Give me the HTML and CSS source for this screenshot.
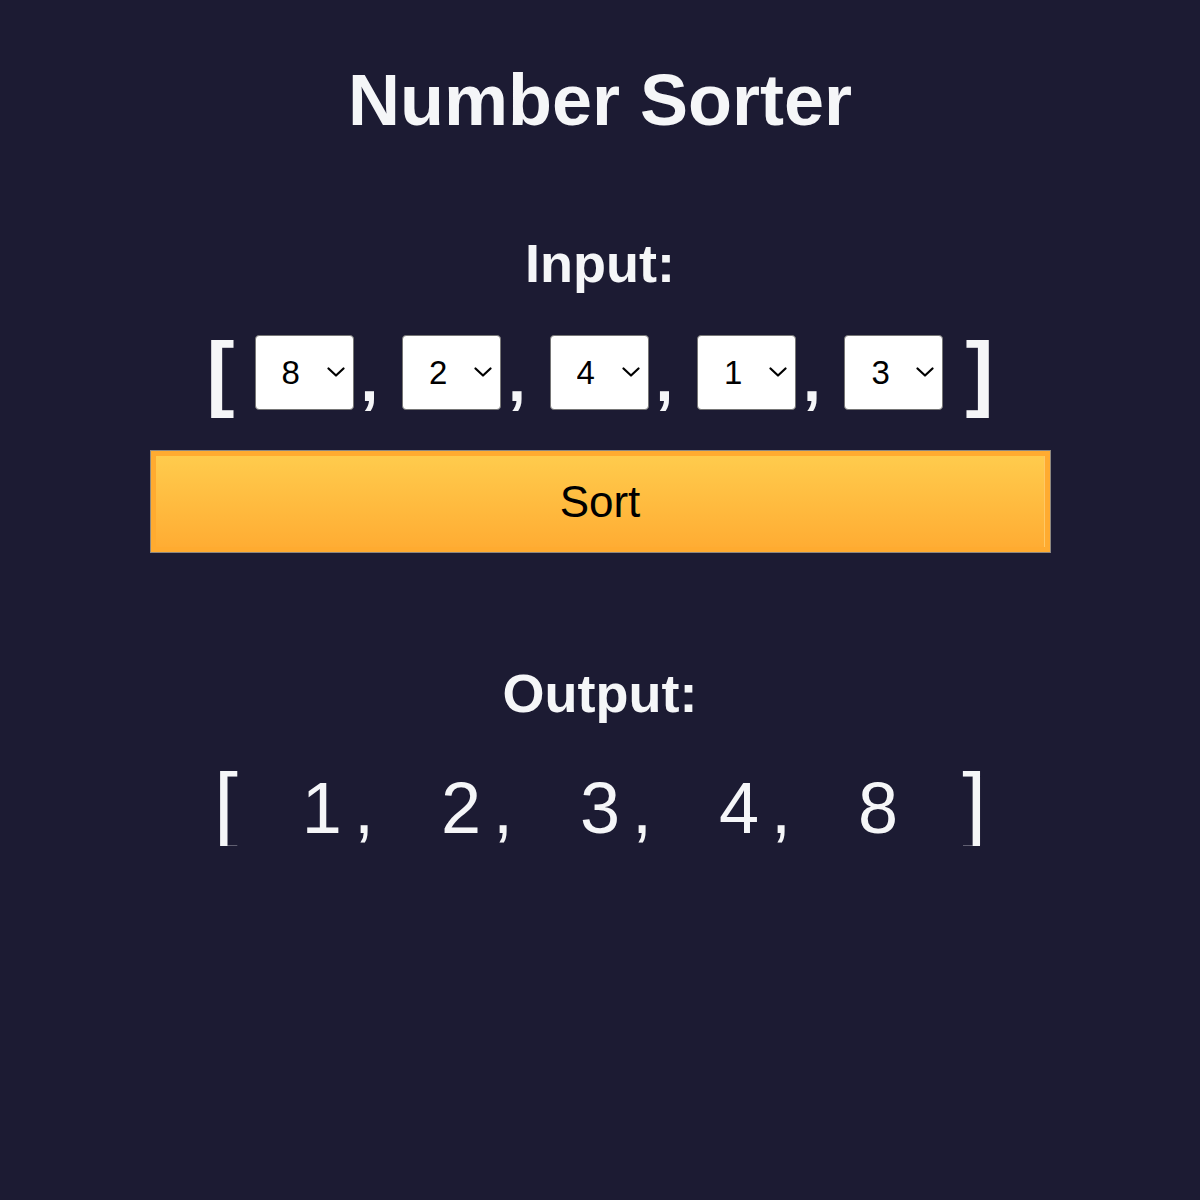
FILE: index.html
```html
<!DOCTYPE html>
<html lang="en">
<head>
<meta charset="utf-8">
<title>Number Sorter</title>
<link rel="stylesheet" href="styles.css">
</head>
<body>
<main class="app">
  <h1 class="title">Number Sorter</h1>
  <h2 class="heading heading-input">Input:</h2>
  <div class="input-row">
    <span class="bracket bracket-open">[</span>
    <div class="item">
      <div class="select-wrap">
        <select class="num"><option>1</option><option>2</option><option>3</option><option>4</option><option>5</option><option>6</option><option>7</option><option selected>8</option><option>9</option></select>
        <svg class="chev" width="18" height="10" viewBox="0 0 18 10"><path d="M1.5 1.5 L9 8.5 L16.5 1.5" fill="none" stroke="#000" stroke-width="2.2" stroke-linecap="round" stroke-linejoin="round"/></svg>
      </div>
      <span class="comma">,</span>
    </div>
    <div class="item">
      <div class="select-wrap">
        <select class="num"><option>1</option><option selected>2</option><option>3</option><option>4</option><option>5</option><option>6</option><option>7</option><option>8</option><option>9</option></select>
        <svg class="chev" width="18" height="10" viewBox="0 0 18 10"><path d="M1.5 1.5 L9 8.5 L16.5 1.5" fill="none" stroke="#000" stroke-width="2.2" stroke-linecap="round" stroke-linejoin="round"/></svg>
      </div>
      <span class="comma">,</span>
    </div>
    <div class="item">
      <div class="select-wrap">
        <select class="num"><option>1</option><option>2</option><option>3</option><option selected>4</option><option>5</option><option>6</option><option>7</option><option>8</option><option>9</option></select>
        <svg class="chev" width="18" height="10" viewBox="0 0 18 10"><path d="M1.5 1.5 L9 8.5 L16.5 1.5" fill="none" stroke="#000" stroke-width="2.2" stroke-linecap="round" stroke-linejoin="round"/></svg>
      </div>
      <span class="comma">,</span>
    </div>
    <div class="item">
      <div class="select-wrap">
        <select class="num"><option selected>1</option><option>2</option><option>3</option><option>4</option><option>5</option><option>6</option><option>7</option><option>8</option><option>9</option></select>
        <svg class="chev" width="18" height="10" viewBox="0 0 18 10"><path d="M1.5 1.5 L9 8.5 L16.5 1.5" fill="none" stroke="#000" stroke-width="2.2" stroke-linecap="round" stroke-linejoin="round"/></svg>
      </div>
      <span class="comma">,</span>
    </div>
    <div class="item">
      <div class="select-wrap">
        <select class="num"><option>1</option><option>2</option><option selected>3</option><option>4</option><option>5</option><option>6</option><option>7</option><option>8</option><option>9</option></select>
        <svg class="chev" width="18" height="10" viewBox="0 0 18 10"><path d="M1.5 1.5 L9 8.5 L16.5 1.5" fill="none" stroke="#000" stroke-width="2.2" stroke-linecap="round" stroke-linejoin="round"/></svg>
      </div>
    </div>
    <span class="bracket bracket-close">]</span>
  </div>
  <button class="sort-btn" type="button">Sort</button>
  <h2 class="heading heading-output">Output:</h2>
  <div class="output-row">
    <span class="out-bracket out-open">[</span>
    <span class="out-item">1<span class="out-comma">,</span></span>
    <span class="out-item">2<span class="out-comma">,</span></span>
    <span class="out-item">3<span class="out-comma">,</span></span>
    <span class="out-item">4<span class="out-comma">,</span></span>
    <span class="out-item">8</span>
    <span class="out-bracket out-close">]</span>
  </div>
</main>
</body>
</html>
```

FILE: styles.css
```css
html, body {
  margin: 0;
  padding: 0;
  background: #1c1b33;
}

body {
  font-family: "Liberation Sans", Arial, sans-serif;
  color: #f5f6f8;
}

.app {
  display: flex;
  flex-direction: column;
  align-items: center;
  padding-top: 64px;
}

.title {
  margin: 0;
  font-size: 72px;
  line-height: 1;
  font-weight: bold;
}

.heading {
  margin: 0;
  font-size: 54px;
  line-height: 1;
  font-weight: bold;
}

.heading-input {
  margin-top: 100px;
}

/* ---------- input row ---------- */
.input-row {
  margin-top: 40px;
  height: 84px;
  display: flex;
  align-items: flex-start;
}

.bracket {
  font-size: 84px;
  line-height: 1;
  font-weight: bold;
}

.bracket-open {
  margin-right: 20px;
}

.bracket-close {
  margin-left: 22px;
}

.item {
  display: flex;
  align-items: flex-start;
}

.item + .item {
  margin-left: 23.7px;
}

.select-wrap {
  position: relative;
  margin-top: 5px;
  width: 99px;
  height: 75px;
}

.num {
  -webkit-appearance: none;
  appearance: none;
  box-sizing: border-box;
  width: 99px;
  height: 75px;
  margin: 0;
  font-family: "Liberation Sans", Arial, sans-serif;
  font-size: 33px;
  padding: 0 0 0 26px;
  color: #000;
  background: #fff;
  border: 1px solid #767676;
  border-radius: 4px;
}

.chev {
  position: absolute;
  right: 9px;
  top: 32px;
  pointer-events: none;
}

.comma {
  margin-left: 7px;
  margin-top: 17px;
  font-size: 64px;
  line-height: 1;
  font-weight: bold;
}

/* ---------- button ---------- */
.sort-btn {
  margin-top: 36px;
  width: 901px;
  height: 103px;
  border: 1px solid #8c8780;
  box-shadow: inset 0 0 0 5px #ffab30, inset -6px 0 0 0 #ffc865;
  background: linear-gradient(to bottom, #ffcd4e, #ffab32);
  font-family: "Liberation Sans", Arial, sans-serif;
  font-size: 44px;
  color: #000;
  padding: 0;
  cursor: pointer;
}

/* ---------- output ---------- */
.heading-output {
  margin-top: 113px;
}

.output-row {
  margin-top: 40px;
  display: flex;
  align-items: baseline;
}

.out-bracket {
  font-size: 86px;
  line-height: 1;
}

.out-open {
  margin-right: 64px;
}

.out-close {
  margin-left: 64px;
}

.out-item {
  font-size: 72px;
  line-height: 1;
}

.out-item + .out-item {
  margin-left: 67px;
}

.out-comma {
  margin-left: 12px;
}
```
